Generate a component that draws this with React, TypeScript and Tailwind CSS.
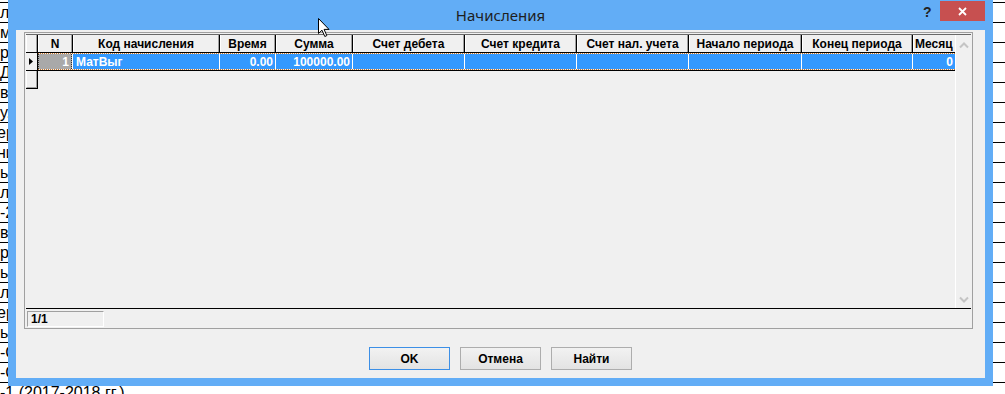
import React from 'react';

type Col = { t: string; w: string; v?: string; left?: boolean; hs?: boolean };

const cols: Col[] = [
  { t: 'N', w: 'w-[35px]', v: '1' },
  { t: 'Код начисления', w: 'w-[147px]', v: 'МатВыг', left: true },
  { t: 'Время', w: 'w-[56px]', v: '0.00' },
  { t: 'Сумма', w: 'w-[77px]', v: '100000.00' },
  { t: 'Счет дебета', w: 'w-[112px]' },
  { t: 'Счет кредита', w: 'w-[112px]' },
  { t: 'Счет нал. учета', w: 'w-[112px]' },
  { t: 'Начало периода', w: 'w-[113px]' },
  { t: 'Конец периода', w: 'w-[111px]' },
  { t: 'Месяц', w: 'w-[42px]', v: '0', hs: true },
];

const bgRows = [
  '', 'л', 'м', 'р', 'Д', 'в', 'у.', 'ер', 'ни', 'ь', 'л', '-2', 'в', 'р', 'ь', 'л', 'ер', 'ь', '-С', '-С',
  '-1 (2017-2018 гг.)',
];

function Chevron({ down }: { down?: boolean }) {
  return (
    <svg width="10" height="7" viewBox="0 0 10 7">
      <path
        d={down ? 'M1 1.5 L5 5.5 L9 1.5' : 'M1 5.5 L5 1.5 L9 5.5'}
        fill="none"
        stroke="#c4c4c4"
        strokeWidth="2"
      />
    </svg>
  );
}

function Grid() {
  return (
    <div className="ml-[8px] mt-[2px] w-[949px] h-[297px] border border-[#a0a0a0] px-[1px] pt-[1px] flex flex-col font-['Liberation_Sans',Arial,sans-serif]">
      <div className="h-[274px] border-t border-t-[#696969] flex">
        <div className="w-[929px] h-full overflow-hidden flex flex-col">
          {/* header */}
          <div className="h-[18px] flex border-b border-b-black">
            <div className="w-[12px] flex-none h-full border-r border-r-black">
              <div className="h-full border-l border-l-white border-r border-r-[#a0a0a0]" />
            </div>
            {cols.map((c, i) => (
              <div key={i} className={`${c.w} flex-none h-full ${c.hs ? '' : 'border-r border-r-black'}`}>
                <div
                  className={`h-full border-l border-l-white ${c.hs ? '' : 'border-r border-r-[#a0a0a0]'} flex items-center ${
                    c.hs ? 'justify-start pl-[1px]' : 'justify-center'
                  } overflow-hidden whitespace-nowrap text-[12px] font-bold text-black`}
                >
                  {c.t}
                </div>
              </div>
            ))}
          </div>
          {/* data row */}
          <div className="h-[18px] flex border-b border-b-black">
            <div className="w-[12px] flex-none h-full border-r border-r-black flex items-center pl-[3px]">
              <svg width="4" height="7" viewBox="0 0 4 7">
                <path d="M0 0 L4 3.5 L0 7 Z" fill="#000" />
              </svg>
            </div>
            <div className="flex h-full border-y border-dotted border-y-[#c8782f]">
              {cols.map((c, i) => (
                <div
                  key={i}
                  className={`${c.w} flex-none h-full ${c.hs ? '' : 'border-r border-r-white'} ${
                    i === 0 ? 'bg-[#a9a9a9]' : 'bg-[#3399ff]'
                  } text-white font-bold text-[12px] whitespace-nowrap overflow-hidden`}
                >
                  <div
                    className={`h-full flex items-center ${
                      c.left ? 'justify-start pl-[3px]' : 'justify-end pr-[2px]'
                    } ${i === 0 ? 'border-x border-dotted border-x-[#303030]' : ''}`}
                  >
                    {c.v ?? ''}
                  </div>
                </div>
              ))}
            </div>
          </div>
          {/* empty row indicator */}
          <div className="h-[18px] flex">
            <div className="w-[12px] flex-none h-full border-r border-r-black border-b border-b-black">
              <div className="h-full border-l border-l-white border-r border-r-[#a0a0a0] border-b border-b-[#a0a0a0]" />
            </div>
          </div>
        </div>
        {/* scrollbar */}
        <div className="w-[16px] h-full border-l border-l-white flex flex-col items-center justify-between pt-[7px] pb-[5px]">
          <Chevron />
          <Chevron down />
        </div>
      </div>
      {/* status bar */}
      <div className="h-[20px] border-t border-t-black flex items-start">
        <div className="ml-[1px] mt-[2px] w-[77px] h-[16px] border-t border-l border-t-[#a0a0a0] border-l-[#a0a0a0] border-b border-r border-b-white border-r-white flex items-center pl-[3px] text-[12px] font-bold text-black">
          1/1
        </div>
      </div>
    </div>
  );
}

function Btn({ label, primary }: { label: string; primary?: boolean }) {
  return (
    <div
      className={`w-[81px] h-[23px] border ${
        primary ? 'border-[#3c8fe6]' : 'border-[#adadad]'
      } bg-gradient-to-b from-[#f2f2f2] to-[#e3e3e3] flex items-center justify-center text-[12px] font-bold text-black font-['Liberation_Sans',Arial,sans-serif]`}
    >
      {label}
    </div>
  );
}

export default function App() {
  return (
    <div className="relative w-[1005px] h-[394px] overflow-hidden bg-white">
      {/* background spreadsheet */}
      <div className="mt-[-17px] flex flex-col font-['Liberation_Sans',Arial,sans-serif] text-black">
        {bgRows.map((t, i) => (
          <div
            key={i}
            className="h-[20px] border-b border-b-black flex items-center text-[16px] leading-none whitespace-nowrap"
          >
            <span className={t === 'ер' || t === 'ни' ? 'ml-[-3px]' : ''}>{t}</span>
          </div>
        ))}
      </div>

      {/* dialog window */}
      <div className="absolute left-[8px] top-0 w-[985px] h-[386px] bg-[#62adf6] flex flex-col">
        <div className="relative h-[30px] flex-none">
          <div className="w-full text-center leading-[31px] text-[15px] text-[#1e1e1e] font-['Noto_Sans','Open_Sans',sans-serif]">
            Начисления
          </div>
          <div className="absolute left-[915px] top-[2px] text-[14px] font-bold text-[#222] font-['Liberation_Sans',Arial,sans-serif]">
            ?
          </div>
          <div className="absolute right-[8px] top-[1px] w-[45px] h-[20px] bg-[#c75050] flex items-center justify-center">
            <svg width="9" height="9" viewBox="0 0 9 9">
              <path d="M1 1 L8 8 M8 1 L1 8" stroke="#fff" strokeWidth="1.8" />
            </svg>
          </div>
        </div>
        <div className="mx-[8px] h-[348px] bg-[#f0f0f0] flex flex-col">
          <Grid />
          <div className="mt-[18px] flex justify-center gap-[10px]">
            <Btn label="OK" primary />
            <Btn label="Отмена" />
            <Btn label="Найти" />
          </div>
        </div>
      </div>

      {/* mouse cursor */}
      <svg className="absolute left-[318px] top-[18px]" width="13" height="20" viewBox="0 0 13 20">
        <path
          d="M0.5 0.5 L0.5 15.5 L4 12.2 L6.8 18.5 L8.8 17.6 L6.1 11.4 L11 11.4 Z"
          fill="#fff"
          stroke="#000"
          strokeWidth="1"
        />
      </svg>
    </div>
  );
}
